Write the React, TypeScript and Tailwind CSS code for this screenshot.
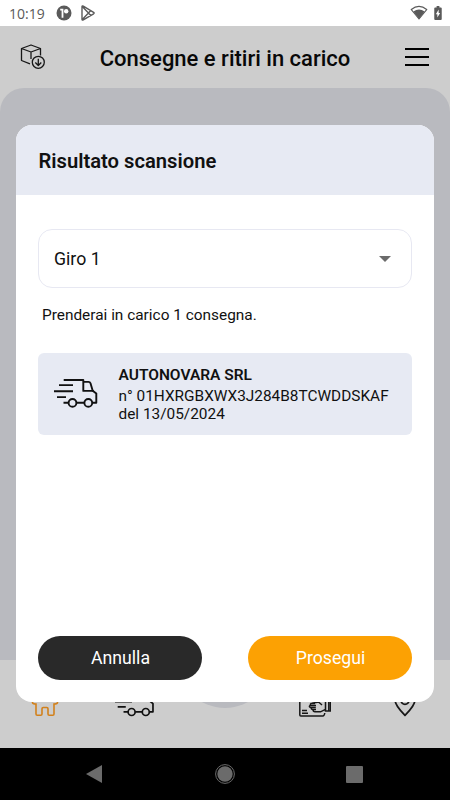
const Truck = ({ className }: { className: string }) => (
  <svg className={className} viewBox="0 0 44 30" fill="none" stroke="currentColor" strokeWidth="1.9" strokeLinejoin="round">
    <path d="M9.7 1h19.6v10.9h10.5M5 6.1h14M0 12.3h19M3 18.1h9M9.5 23.7h5" />
    <path d="M29.3 2.9h5.2q1.5 0 2 1.4l2.2 7.4 3.6 2.8v9.2h-4M22.5 23.7h7.8" />
    <circle cx="18.5" cy="23.9" r="3.9" />
    <circle cx="34.3" cy="23.9" r="3.9" />
  </svg>
);

const StatusBar = () => (
  <div className="flex h-[26px] items-center justify-between bg-white pr-2 pl-[9px] text-[#5a5a5a]">
    <div className="flex items-center">
      <span className="w-[47px] pt-px font-['Open_Sans',sans-serif] text-[14px] leading-none font-medium">10:19</span>
      <svg className="h-4 w-4" viewBox="0 0 16 16">
        <circle cx="8" cy="8" r="7.5" fill="currentColor" />
        <path d="M4.2 3.8h3.2v9H5.6V5.4H4.2z" fill="#fff" />
        <circle cx="10.2" cy="6.2" r="2.2" fill="#fff" />
      </svg>
      <svg className="ml-2 h-4 w-4" viewBox="0 0 16 16" fill="none" stroke="currentColor" strokeWidth="1.4" strokeLinejoin="round">
        <path d="M2 1.5v13q0 1 1.3.3L13.6 8.8q1-.8 0-1.500L3.300 1.100Q2 .5 2 1.500zM2.300 1.500l8.500 9M2.300 14.500l8.500-9" />
      </svg>
    </div>
    <div className="flex items-center">
      <svg className="h-4 w-[18px]" viewBox="0 0 18 16">
        <path d="M1.3 4.5Q9-1.8 16.7 4.5L9 14z" fill="#fff" stroke="currentColor" strokeWidth="1.1" />
        <path d="M3.4 6.5Q9 2.6 14.6 6.500L9 14z" fill="currentColor" />
      </svg>
      <svg className="ml-1.5 h-[14px] w-2" viewBox="0 0 8 15">
        <path d="M2.5 0h3v1.5H7q1 0 1 1V14q0 1-1 1H1q-1 0-1-1V2.500q0-1 1-1h1.500z" fill="currentColor" />
        <path d="M4.7 3.800v3.600h1.600l-3 5V8.900H1.700z" fill="#fff" />
      </svg>
    </div>
  </div>
);

const Header = () => (
  <div className="flex h-[62px] items-center justify-between bg-[#cdcdcd] pr-[21px] pl-5">
    <svg className="h-7 w-7" viewBox="0 0 28 28" fill="none" stroke="#171717" strokeWidth="1.3" strokeLinejoin="round">
      <path d="M10 20.800l-8.500-3.300V5.500L11 2l9.500 3.500v7M1.500 5.500L11 9l9.500-3.500M11 9v7" />
      <circle cx="18.300" cy="19.300" r="6" fill="#cdcdcd" />
      <path d="M18.300 15.700v6.500M15.300 19.500l3 3 3-3" />
    </svg>
    <h1 className="mr-[3px] pt-0.5 text-[22px] font-medium text-[#080808]">Consegne e ritiri in carico</h1>
    <div className="flex flex-col gap-[6px]">
      <span className="h-[2px] w-6 bg-black" />
      <span className="h-[2px] w-6 bg-black" />
      <span className="h-[2px] w-6 bg-black" />
    </div>
  </div>
);

const BottomNav = () => (
  <div className="relative h-[88px] bg-[#cdcdcd]">
    <span className="absolute top-[-48px] left-[177px] h-24 w-24 rounded-full bg-[#b9babf]" />
    <div className="relative grid h-full grid-cols-5 items-start pt-[30px]">
      <svg className="h-7 w-[28px] justify-self-center" viewBox="0 0 28 28" fill="none" stroke="#d2811c" strokeWidth="1.6">
        <path d="M14 1L1.500 11v1.500q0 1.500 3.500 1.500v10q0 1.200 1.200 1.200h3.600q1.200 0 1.200-1.200v-5.300q0-1.200 1.200-1.200h3.600q1.200 0 1.200 1.200v5.300q0 1.200 1.200 1.200h3.600q1.200 0 1.200-1.200V14q3.500 0 3.500-1.500V11z" />
      </svg>
      <Truck className="h-[28px] w-[39.5px] justify-self-center" />
      <span />
      <svg className="h-7 w-8 justify-self-center" viewBox="0 0 32 28" fill="none" stroke="#171717" strokeWidth="1.5">
        <path d="M.8 2v23q0 1 1 1h22q1.500 0 2-3M3 20.500h5M3 23.300h6" />
        <path d="M19.500 12l-6.500 1.200M16 13.500h-4q-1.300 1.300 0 1.900h5M13 15.400h-2q-1.300 1.500.300 2h5.500M13 17.500q-1.500 1.800.5 2h3.500M14 19.500q0 2.300 2 2.300h5.500l5-2.500M19.500 12l3.500 3M26.500 10v11h5V10M29.800 10v11" />
      </svg>
      <svg className="h-7 w-[22px] justify-self-center" viewBox="0 0 22 28" fill="none" stroke="#171717" strokeWidth="1.8">
        <path d="M11 25.300Q1 15.500 1 9.500a10 10 0 0 1 20 0Q21 15.500 11 25.300z" />
        <circle cx="11" cy="10.300" r="4" />
      </svg>
    </div>
  </div>
);

const ScanDialog = () => (
  <div className="absolute top-[124.5px] left-4 flex h-[577px] w-[418px] flex-col overflow-hidden rounded-2xl bg-white">
    <div className="flex h-[70.5px] shrink-0 items-center bg-[#e7eaf3] px-[22.5px] pt-0.5">
      <h2 className="text-[20.2px] font-semibold">Risultato scansione</h2>
    </div>
    <div className="flex flex-1 flex-col px-[22px] pt-[33.5px] pb-[22px]">
      <div className="flex h-[59px] items-center justify-between rounded-[14px] border border-[#e7e8f2] pr-5 pl-[15px] pt-0.5">
        <span className="text-[17.7px]">Giro 1</span>
        <svg className="h-1.5 w-3" viewBox="0 0 12 6">
          <path d="M0 0h12L6 6z" fill="#6b6b6b" />
        </svg>
      </div>
      <p className="mt-[16px] ml-1 text-[15.4px] leading-[22px]">Prenderai in carico 1 consegna.</p>
      <div className="mt-[27px] flex h-[82px] items-center rounded-md bg-[#e7eaf3] pl-4">
        <Truck className="h-[30px] w-11" />
        <div className="ml-[20.5px] pt-0.5 text-[15.4px] leading-[18px]">
          <p className="mb-[3px] text-[15.5px] font-semibold">AUTONOVARA SRL</p>
          <p>n° 01HXRGBXWX3J284B8TCWDDSKAF</p>
          <p>del 13/05/2024</p>
        </div>
      </div>
      <div className="mt-auto flex justify-between text-[17.7px] text-white">
        <button className="h-[43.5px] w-[164px] rounded-full bg-[#292929] pt-0.5 pl-px">Annulla</button>
        <button className="h-[43.5px] w-[164px] rounded-full bg-[#fca103] pt-0.5 pl-px">Prosegui</button>
      </div>
    </div>
  </div>
);

const SystemNav = () => (
  <div className="flex h-[52px] items-center justify-between bg-black pr-[87px] pl-[86px] text-[#6b6b6b]">
    <svg className="h-[18px] w-4" viewBox="0 0 16 18">
      <path d="M0 9L16 0v18z" fill="currentColor" />
    </svg>
    <svg className="ml-[2px] h-5 w-5" viewBox="0 0 20 20">
      <circle cx="10" cy="10" r="9.4" fill="none" stroke="currentColor" />
      <circle cx="10" cy="10" r="7.7" fill="currentColor" />
    </svg>
    <span className="h-[17px] w-[17px] rounded-[1px] bg-current" />
  </div>
);

export default function App() {
  return (
    <div className="relative flex h-[800px] w-[450px] flex-col overflow-hidden bg-[#cdcdcd] font-[Roboto,sans-serif] text-[#111]">
      <StatusBar />
      <Header />
      <div className="flex-1 rounded-t-[24px] bg-[#b9babf]" />
      <BottomNav />
      <SystemNav />
      <ScanDialog />
    </div>
  );
}
